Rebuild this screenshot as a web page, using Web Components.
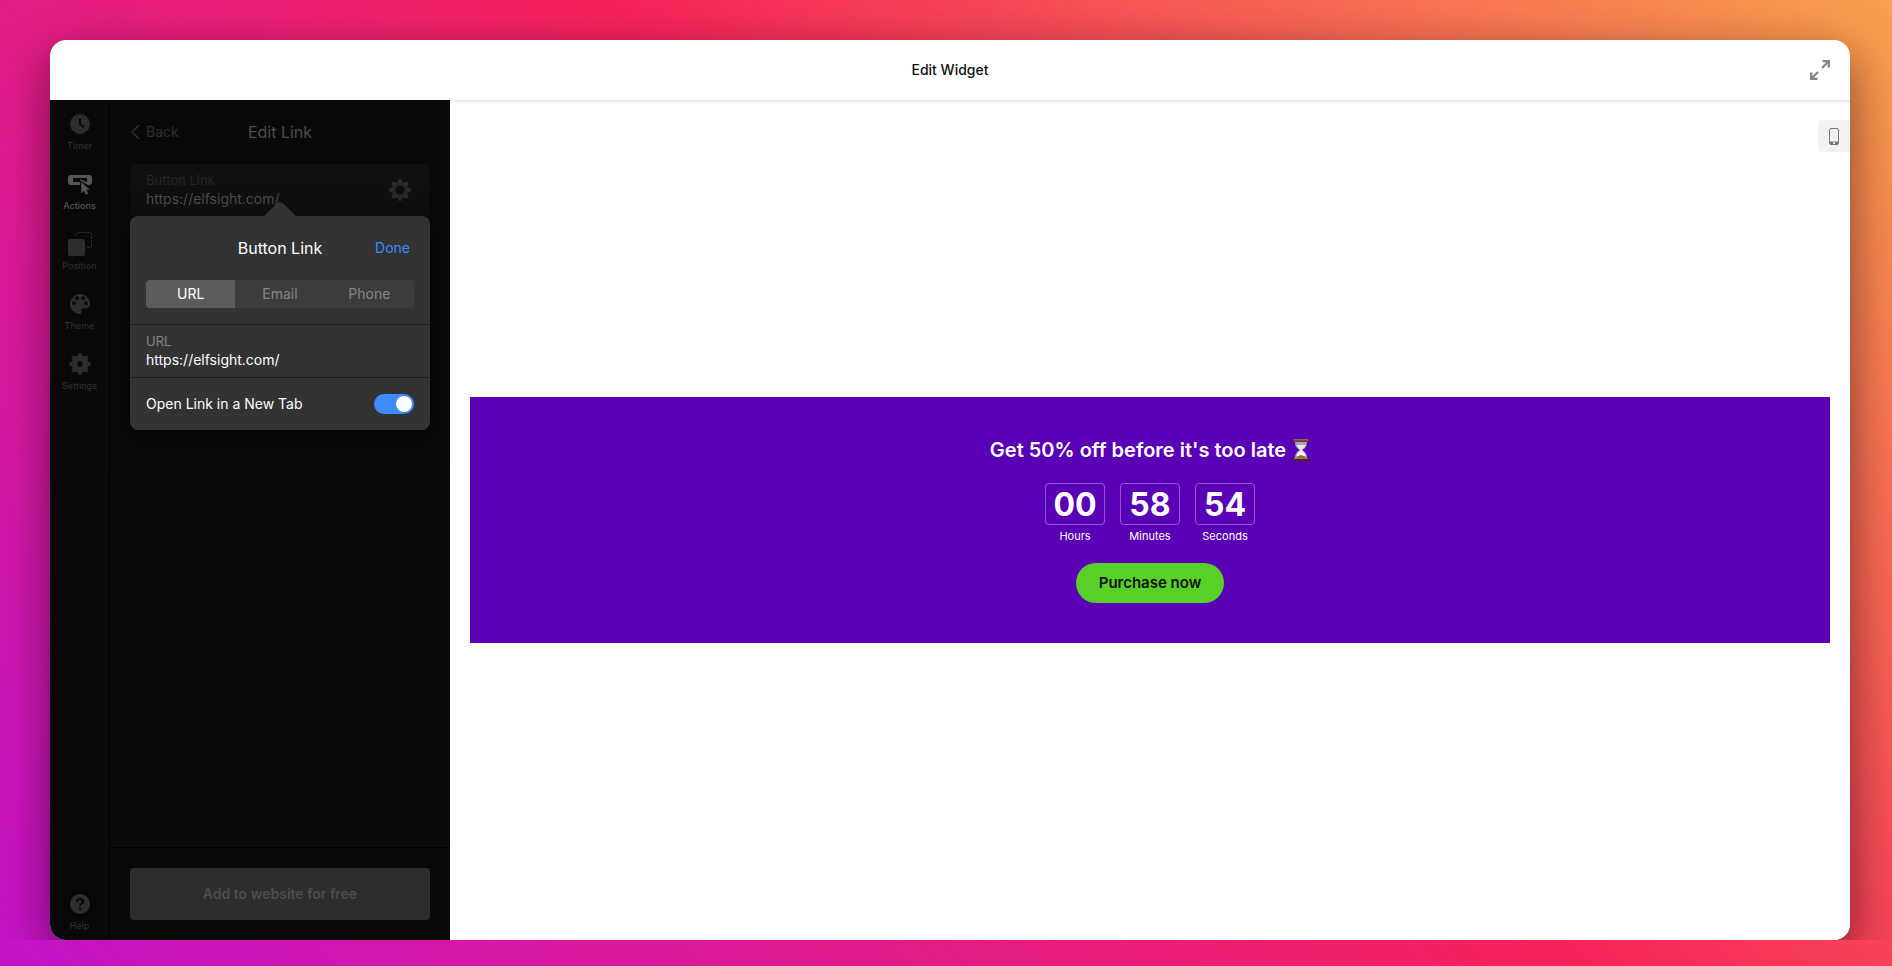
<!DOCTYPE html>
<html lang="en">
<head>
<meta charset="utf-8">
<title>Edit Widget</title>
<style>
html, body { height: 100%; margin: 0; }
body { font-family: Inter, "Liberation Sans", sans-serif; font-size: 14px; line-height: 18px; background: linear-gradient(45deg, #c413c9 0%, #f7225b 55%, #f9a04d 100%); }
</style>
</head>
<body>
<editor-window>
  <editor-nav slot="nav">
    <nav-item label="Timer"><svg viewBox="0 0 24 24" fill="currentColor"><path fill-rule="evenodd" d="M12 2a10 10 0 1 1 0 20a10 10 0 0 1 0-20zM11 6v6.600l4.200 3.300 1.200-1.600-3.400-2.600V6z"/></svg></nav-item>
    <nav-item label="Actions" current><svg viewBox="0 0 24 24" fill="currentColor"><path fill-rule="evenodd" d="M3 3h18a3 3 0 0 1 3 3v4a3 3 0 0 1-3 3h-.8L12 8.500V13H3a3 3 0 0 1-3-3V6a3 3 0 0 1 3-3zM5 6v4h7V7.200L19 10V6z"/><path d="M13 10l8.800 7.500-3.600.3 2 3.700-2.200 1.200-2-4-2.600 2.500z"/></svg></nav-item>
    <nav-item label="Position"><svg viewBox="0 0 24 24" fill="currentColor"><rect x="0" y="7" width="17" height="17" rx="2"/><path d="M8.500 3.500V2A1.500 1.500 0 0 1 10 .5h12A1.500 1.500 0 0 1 23.500 2v12a1.500 1.500 0 0 1-1.500 1.500h-4" fill="none" stroke="currentColor" stroke-dasharray="3 1"/></svg></nav-item>
    <nav-item label="Theme"><svg viewBox="0 0 24 24" fill="currentColor"><path fill-rule="evenodd" d="M12 2C6.500 2 2 6.500 2 12s4.500 10 10 10c.8 0 1.300-.6 1.300-1.300v-2.600c0-1 .8-1.800 1.800-1.800h2.300C20 16.300 22 14.200 22 11.500 22 6 17.500 2 12 2zM6 9.300a1.900 1.900 0 1 1 0 3.800a1.900 1.900 0 0 1 0-3.800zM9.200 4.200a1.900 1.900 0 1 1 0 3.800a1.900 1.900 0 0 1 0-3.800zM15 4.200a1.900 1.900 0 1 1 0 3.800a1.900 1.900 0 0 1 0-3.800zM18 9.300a1.900 1.900 0 1 1 0 3.800a1.900 1.900 0 0 1 0-3.800z"/></svg></nav-item>
    <nav-item label="Settings"><gear-icon hole="3.5"></gear-icon></nav-item>
    <nav-item slot="end" label="Help"><svg viewBox="0 0 24 24"><circle cx="12" cy="12" r="10" fill="currentColor"/><path d="M9 9.800C9 7.800 10.300 7 12 7s3.100.9 3.100 2.600c0 2-3 2-3 4.300M12.100 15.700v2" fill="none" stroke="#080808" stroke-width="2.200"/></svg></nav-item>
  </editor-nav>
  <link-panel slot="panel"><link-popover></link-popover></link-panel>
  <widget-preview slot="preview">
    <time-unit value="00" label="Hours"></time-unit>
    <time-unit value="58" label="Minutes"></time-unit>
    <time-unit value="54" label="Seconds"></time-unit>
  </widget-preview>
</editor-window>
<script>
const define = (name, markup, setup) => {
  const template = document.createElement('template');
  template.innerHTML = '<style>*{box-sizing:border-box}button,input{font:inherit;color:inherit;border:0;padding:0;margin:0;background:none}button{cursor:pointer}</style>' + markup;
  customElements.define(name, class extends HTMLElement {
    constructor() {
      super();
      this.attachShadow({ mode: 'open' }).append(template.content.cloneNode(true));
    }
    connectedCallback() { if (setup) setup(this, this.shadowRoot); }
  });
};

define('gear-icon', `
<style>:host{display:block;width:24px;height:24px}svg{display:block;width:100%;height:100%}</style>
<svg viewBox="0 0 24 24"><path fill="currentColor" stroke="currentColor" stroke-width="1.500" stroke-linejoin="round" fill-rule="evenodd"/></svg>`, (el, root) => {
  const pts = [];
  for (let i = 0; i < 8; i++) {
    for (const [offset, r] of [[-14, 7.6], [-6, 10.1], [6, 10.1], [14, 7.6]]) {
      const a = (i * 45 + offset) * Math.PI / 180;
      pts.push((12 + r * Math.sin(a)).toFixed(2) + ' ' + (12 - r * Math.cos(a)).toFixed(2));
    }
  }
  const h = Number(el.getAttribute('hole'));
  root.querySelector('path').setAttribute('d',
    'M' + pts.join('L') + 'ZM' + (12 - h) + ' 12a' + h + ' ' + h + ' 0 1 0 ' + 2 * h + ' 0a' + h + ' ' + h + ' 0 1 0 ' + -2 * h + ' 0Z');
});

define('editor-window', `
<style>
:host{display:block;height:100%;padding:40px 42px 26px 50px;box-sizing:border-box}
.clip{height:100%;clip-path:inset(-40px -50px 0 -50px)}
.window{height:100%;display:flex;flex-direction:column;border-radius:16px;overflow:hidden;background:#fff;box-shadow:0 16px 48px rgba(0,0,0,.5)}
header{flex:none;height:60px;display:grid;grid-template-columns:1fr auto 1fr;align-items:center;padding:0 20px}
h1{grid-column:2;margin:0;font-size:14px;font-weight:500;color:#111}
header button{justify-self:end;width:20px;height:20px;color:#858585}
svg{display:block;width:20px;height:20px}
.body{flex:1;min-height:0;display:flex}
.side{display:flex;flex:none}
.main{flex:1;display:flex;background:linear-gradient(#e9e9e9,#fff 4px)}
</style>
<div class="clip"><div class="window">
<header><h1>Edit Widget</h1><button aria-label="Expand"><svg viewBox="0 0 20 20" fill="none" stroke="currentColor" stroke-width="2"><path d="M12.500 1.200h6.300v6.300M18.800 1.200L12 8M7.500 18.800H1.200v-6.300M1.200 18.800L8 12" stroke-width="2.300"/></svg></button></header>
<div class="body"><div class="side"><slot name="nav"></slot><slot name="panel"></slot></div><div class="main"><slot name="preview"></slot></div></div>
</div></div>`);

define('editor-nav', `
<style>:host{display:block;width:60px;background:#090909;border-right:1px solid #000;box-sizing:border-box}
nav{height:100%;display:flex;flex-direction:column}.end{margin-top:auto}</style>
<nav><slot></slot><div class="end"><slot name="end"></slot></div></nav>`);

define('nav-item', `
<style>:host{display:block;color:#2d2d2d}:host([current]){color:#555}
button{width:100%;height:60px;display:flex;flex-direction:column;align-items:center;padding:12px 0 0;gap:4px}
::slotted(*){display:block;width:24px;height:24px}
span{font-size:9px;line-height:12px;font-weight:500}</style>
<button><slot></slot><span></span></button>`, (el, root) => {
  root.querySelector('span').textContent = el.getAttribute('label');
});

define('link-panel', `
<style>
:host{display:flex;flex-direction:column;width:340px;overflow:hidden;background:#090909;color:#4d4d4d}
.content{flex:1;padding:0 20px}
header{height:64px;display:grid;grid-template-columns:1fr auto 1fr;align-items:center}
.back{justify-self:start;display:flex;align-items:center;gap:6px;color:#2d2d2d}
.back svg{width:10px;height:16px}
h2{margin:0;font-size:16px;line-height:20px;font-weight:400}
.field{height:52px;padding:8px 16px 0;display:flex;justify-content:space-between;background:#101010;border-radius:4px 4px 0 0}
label{display:block;font-size:13px;line-height:16px;color:#262626}
input{display:block;width:200px;height:20px;outline:0}
.field button{width:24px;height:24px;margin:6px 2px 0 0;color:#2b2b2b}
footer{border-top:1px solid #000;padding:20px}
.add{display:block;width:100%;height:52px;border-radius:4px;background:#2d2d2d;color:#4d4d4d;font-weight:600}
</style>
<div class="content">
<header><button class="back"><svg viewBox="0 0 10 16" fill="none" stroke="currentColor" stroke-width="1.500"><path d="M9 1L2 8l7 7"/></svg>Back</button><h2>Edit Link</h2></header>
<div class="field"><div><label for="link">Button Link</label><input id="link" value="https://elfsight.com/"></div><button aria-label="Link settings"><gear-icon hole="5.5"></gear-icon></button></div>
<slot></slot>
</div>
<footer><button class="add">Add to website for free</button></footer>`);

define('link-popover', `
<style>
:host{display:block;position:relative;border-radius:8px;background:#333;color:#fff;box-shadow:0 8px 32px rgba(0,0,0,.6)}
.arrow{position:absolute;left:50%;top:-14px;width:32px;height:14px;margin-left:-16px;color:#333}
header{height:64px;display:grid;grid-template-columns:1fr auto 1fr;align-items:center;padding:0 20px}
h3{grid-column:2;margin:0;font-size:16px;line-height:20px;font-weight:400}
.done{justify-self:end;color:#3d8bfd}
.tabs{margin:0 16px 16px;height:28px;display:flex;border-radius:4px;overflow:hidden;background:#3c3c3c}
.tabs button{flex:1;color:#858585}.tabs [aria-selected=true]{background:#5c5c5c;color:#fff}
.field{height:53px;border-top:1px solid #1f1f1f;padding:8px 16px 0}
.field label{display:block;font-size:13px;line-height:16px;color:#858585}
.field input{display:block;width:100%;height:20px;outline:0}
.row{height:53px;border-top:1px solid #1f1f1f;padding:0 16px;display:flex;align-items:center;justify-content:space-between}
.row input{appearance:none;width:40px;height:20px;border-radius:10px;background:#555;display:flex;padding:2px}
.row input::before{content:"";width:16px;height:16px;border-radius:8px;background:#fff}
.row input:checked{background:#3d8bfd;justify-content:flex-end}
</style>
<svg class="arrow" viewBox="0 0 32 14"><path fill="currentColor" d="M0 14L13 1.500Q16-1 19 1.500L32 14z"/></svg>
<header><h3>Button Link</h3><button class="done">Done</button></header>
<div class="tabs" role="tablist"><button role="tab" aria-selected="true">URL</button><button role="tab">Email</button><button role="tab">Phone</button></div>
<div class="field"><label for="url">URL</label><input id="url" value="https://elfsight.com/"></div>
<div class="row"><label for="tab">Open Link in a New Tab</label><input id="tab" type="checkbox" role="switch" checked></div>`);

define('time-unit', `
<style>:host{display:block;width:60px;text-align:center;color:#fff}
.value{height:42px;border:1px solid #9459d1;border-radius:4px;font-size:32px;line-height:42px;font-weight:700}
.label{margin-top:3px;font-size:11px;line-height:16px}</style>
<div class="value"></div><div class="label"></div>`, (el, root) => {
  root.querySelector('.value').textContent = el.getAttribute('value');
  root.querySelector('.label').textContent = el.getAttribute('label');
});

define('widget-preview', `
<style>
:host{flex:1;display:flex;align-items:center;padding:0 20px;position:relative}
.device{position:absolute;right:0;top:20px;width:32px;height:32px;border-radius:4px 0 0 4px;background:#f2f2f2;color:#777;display:flex;align-items:center;justify-content:center}
.device svg{width:10px;height:17px}
section{flex:1;height:246px;padding-top:40px;background:#5a00b6;display:flex;flex-direction:column;align-items:center}
h2{margin:0;display:flex;align-items:center;gap:6px;font-size:20px;line-height:26px;font-weight:600;color:#fff}
h2 svg{width:18px;height:22px}
.timer{display:flex;gap:15px;margin-top:20px}
.buy{height:40px;padding:0 23px;margin-top:19px;border-radius:20px;background:#58d027;color:#111;font-size:15px;font-weight:600}
</style>
<button class="device" aria-label="Mobile preview"><svg viewBox="0 0 10 17"><rect x=".5" y=".5" width="9" height="16" rx="1.500" fill="none" stroke="currentColor"/><path d="M1 13.500h8V16H1z" fill="currentColor"/><circle cx="5" cy="15" r="1" fill="#fff"/></svg></button>
<section>
<h2>Get 50% off before it's too late <svg viewBox="0 0 18 22" role="img" aria-label="Hourglass"><path fill="#aaa2b8" d="M3 3h12c0 4-1.500 6-4.500 8 3 2 4.500 4 4.500 8H3c0-4 1.500-6 4.500-8C4.500 9 3 7 3 3z"/><path fill="#e9e6e6" d="M4.500 6h9c-.7 2.300-2 3.600-3.700 4.500H8.200C6.500 9.600 5.200 8.300 4.500 6z"/><path fill="#f8f8f8" d="M8.300 10h1.400v2c2 1 3.500 2.500 4 5H4.500c.4-2.500 1.800-4 3.800-5z"/><path fill="#9a6a45" d="M4 19c1-1.700 3-2.500 5-3 2 .5 4 1.300 5 3z"/><rect x="1" width="16" height="3" rx="1" fill="#6b3a2a"/><rect x="1" y="19" width="16" height="3" rx="1" fill="#4d2517"/><path stroke="#a9714d" d="M2 .8h14M2 19.500h14"/></svg></h2>
<div class="timer"><slot></slot></div>
<button class="buy">Purchase now</button>
</section>`);
</script>
</body>
</html>
